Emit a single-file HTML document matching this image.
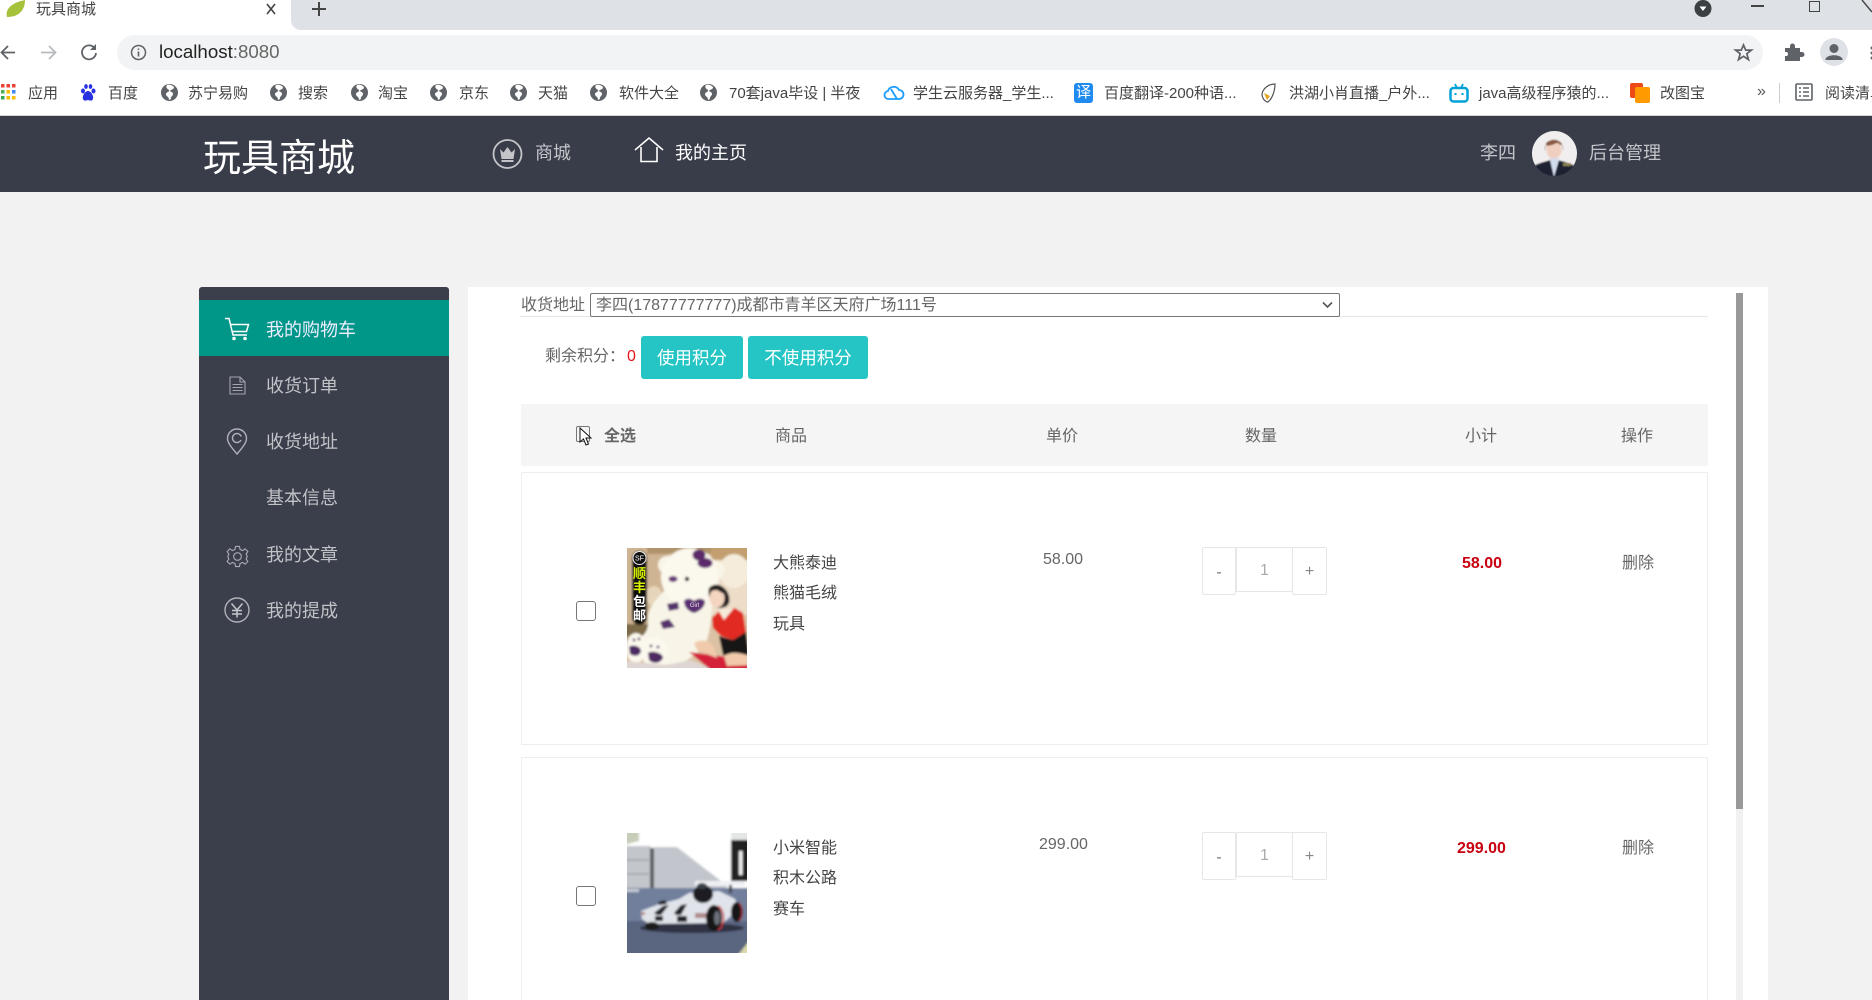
<!DOCTYPE html>
<html lang="zh-CN">
<head>
<meta charset="utf-8">
<title>玩具商城</title>
<style>
*{box-sizing:border-box}
html,body{margin:0;padding:0;width:1872px;height:1000px;overflow:hidden}
body{position:relative;background:#f2f2f2;font-family:"Liberation Sans","Noto Sans CJK SC",sans-serif;color:#666}
#p{position:absolute;left:0;top:0;width:1872px;height:1000px;overflow:hidden}
.a{position:absolute;white-space:nowrap}
.t{position:absolute;white-space:nowrap;line-height:24px;height:24px}
svg{position:absolute;overflow:visible}
.bm{font-size:15px;color:#444;top:82px}
.nav{font-size:18px;top:141px;color:#c4c5c9}
.side{font-size:18px;left:266px;color:#c2c3c7}
.c{font-size:16px;color:#666}
.n{font-size:16px;color:#444;left:773px}
.r{color:#c8000f;font-weight:bold;font-size:16px}
.card{position:absolute;left:521px;width:1187px;border:1px solid #eee;background:#fff}
.step{position:absolute;border:1px solid #e6e6e6;background:#fff;text-align:center;color:#888;font-size:16px;line-height:44px}
</style>
</head>
<body>
<div id="p">
<!-- browser chrome -->
<div class="a" style="left:0;top:0;width:1872px;height:116px;background:#fff"></div>
<div class="a" style="left:291px;top:0;width:1581px;height:30px;background:#dee1e6;border-bottom-left-radius:10px"></div>
<div class="a" style="left:0;top:115px;width:1872px;height:1px;background:#d5d6d8"></div>
<svg style="left:5px;top:0" width="22" height="18" viewBox="0 0 22 18"><path d="M2 17C0 9 6 3 20 0C20 9 15 17 2 17Z" fill="#a5c23a"/></svg>
<div class="t" style="left:36px;top:-2px;font-size:15px;color:#444">玩具商城</div>
<svg style="left:265px;top:3px" width="12" height="12" viewBox="0 0 12 12"><path d="M2 1L10 11M10 1L2 11" stroke="#444" stroke-width="1.6"/></svg>
<svg style="left:311px;top:1px" width="16" height="16" viewBox="0 0 16 16"><path d="M8 1V15M1 8H15" stroke="#444" stroke-width="2"/></svg>
<svg style="left:1694px;top:0" width="18" height="18" viewBox="0 0 18 18"><circle cx="9" cy="8.500" r="8.500" fill="#3c4043"/><path d="M5.500 6.500H12.500L9 11Z" fill="#fff"/></svg>
<div class="a" style="left:1751px;top:5px;width:13px;height:1.500px;background:#444"></div>
<div class="a" style="left:1809px;top:1px;width:11px;height:11px;border:1.500px solid #444;background:#dee1e6"></div>
<svg style="left:1860px;top:0" width="12" height="14" viewBox="0 0 12 14"><path d="M2 0L12 12" stroke="#444" stroke-width="1.400"/></svg>

<svg style="left:0;top:43px" width="20" height="20" viewBox="0 0 20 20"><path d="M15 9.500H2M8 3L1.500 9.500L8 16" fill="none" stroke="#5f6368" stroke-width="1.800"/></svg>
<svg style="left:39px;top:43px" width="20" height="20" viewBox="0 0 20 20"><path d="M2 9.500H16M10 3L16.500 9.500L10 16" fill="none" stroke="#b8babd" stroke-width="1.800"/></svg>
<svg style="left:79px;top:42px" width="20" height="20" viewBox="0 0 20 20"><path d="M15.500 6A7 7 0 1 0 17 11" fill="none" stroke="#5f6368" stroke-width="1.800"/><path d="M17 2V8H11Z" fill="#5f6368"/></svg>
<div class="a" style="left:117px;top:35px;width:1646px;height:35px;border-radius:18px;background:#f1f3f4"></div>
<svg style="left:130px;top:44px" width="17" height="17" viewBox="0 0 17 17"><circle cx="8.500" cy="8.500" r="7" fill="none" stroke="#5f6368" stroke-width="1.500"/><path d="M8.500 7.500V12.500M8.500 4.500V6" stroke="#5f6368" stroke-width="1.600"/></svg>
<div class="t" style="left:159px;top:40px;font-size:18.7px"><span style="color:#222">localhost</span><span style="color:#666">:8080</span></div>
<svg style="left:1734px;top:43px" width="19" height="19" viewBox="0 0 24 24"><path d="M12 2.500L14.800 9H22L16.200 13.500L18.300 21L12 16.800L5.700 21L7.800 13.500L2 9H9.200Z" fill="none" stroke="#5f6368" stroke-width="2.200"/></svg>
<svg style="left:1784px;top:43px" width="19" height="19" viewBox="0 0 19 19"><path d="M1 5H6V3A2.500 2.500 0 0 1 11 3V5H16V9H18A2.500 2.500 0 0 1 18 14H16V18H1V13H3A2.500 2.500 0 0 0 3 9H1Z" fill="#5f6368"/></svg>
<svg style="left:1820px;top:38px" width="28" height="28" viewBox="0 0 28 28"><circle cx="14" cy="14" r="14" fill="#dee1e6"/><circle cx="14" cy="10.500" r="4.500" fill="#5f6368"/><path d="M5.500 21C7 16 21 16 22.500 21V22H5.500Z" fill="#5f6368"/></svg>
<svg style="left:1869px;top:46px" width="6" height="14" viewBox="0 0 6 14"><circle cx="3" cy="2" r="1.500" fill="#5f6368"/><circle cx="3" cy="7" r="1.500" fill="#5f6368"/><circle cx="3" cy="12" r="1.500" fill="#5f6368"/></svg>

<!-- bookmarks -->
<svg style="left:0;top:84px" width="17" height="17" viewBox="0 0 17 17"><g><rect x="1" y="0" width="3.500" height="3.500" fill="#ea4335"/><rect x="6.500" y="0" width="3.500" height="3.500" fill="#ea4335"/><rect x="12" y="0" width="3.500" height="3.500" fill="#ea4335"/><rect x="1" y="6" width="3.500" height="3.500" fill="#4caf50"/><rect x="6.500" y="6" width="3.500" height="3.500" fill="#fbbc05"/><rect x="12" y="6" width="3.500" height="3.500" fill="#4285f4"/><rect x="1" y="12" width="3.500" height="3.500" fill="#34a853"/><rect x="6.500" y="12" width="3.500" height="3.500" fill="#fbbc05"/><rect x="12" y="12" width="3.500" height="3.500" fill="#fbbc05"/></g></svg>
<div class="t bm" style="left:28px">应用</div>
<svg style="left:80px;top:84px" width="16" height="18" viewBox="0 0 16 18"><g fill="#2932e1"><ellipse cx="3" cy="7" rx="2" ry="2.500"/><ellipse cx="6" cy="2.500" rx="1.800" ry="2.400"/><ellipse cx="10.500" cy="2.500" rx="1.800" ry="2.400"/><ellipse cx="13.500" cy="7" rx="2" ry="2.500"/><path d="M8 7C5 7 2 12 3 15C4 18 7 16 8 16C9 16 12 18 13 15C14 12 11 7 8 7Z"/></g></svg>
<div class="t bm" style="left:108px">百度</div>

<svg width="0" height="0"><defs><g id="g"><circle cx="8.500" cy="8.500" r="8.500" fill="#5f6368"/><path d="M6 1C4 4 7 5 8 6C9 8 5 8 5 10C5 13 8 12 8 16L10 15C9 13 12 12 12 10C12 8 10 8 9 7C10 5 13 6 13 3C11 1 8 0 6 1Z" fill="#fff"/></g></defs></svg>
<svg style="left:161px;top:84px" width="17" height="17"><use href="#g"/></svg><div class="t bm" style="left:188px">苏宁易购</div>
<svg style="left:270px;top:84px" width="17" height="17"><use href="#g"/></svg><div class="t bm" style="left:298px">搜索</div>
<svg style="left:351px;top:84px" width="17" height="17"><use href="#g"/></svg><div class="t bm" style="left:378px">淘宝</div>
<svg style="left:430px;top:84px" width="17" height="17"><use href="#g"/></svg><div class="t bm" style="left:459px">京东</div>
<svg style="left:510px;top:84px" width="17" height="17"><use href="#g"/></svg><div class="t bm" style="left:538px">天猫</div>
<svg style="left:590px;top:84px" width="17" height="17"><use href="#g"/></svg><div class="t bm" style="left:619px">软件大全</div>
<svg style="left:700px;top:84px" width="17" height="17"><use href="#g"/></svg><div class="t bm" style="left:729px">70套java毕设 | 半夜</div>
<svg style="left:884px;top:84px" width="20" height="18" viewBox="0 0 20 18"><path d="M5 15A4 4 0 0 1 4 7A6 6 0 0 1 15 6A4.500 4.500 0 0 1 15 15Z M7 5L13 15" fill="none" stroke="#1e9fff" stroke-width="1.800"/></svg>
<div class="t bm" style="left:913px">学生云服务器_学生...</div>
<div class="a" style="left:1074px;top:83px;width:19px;height:20px;border-radius:3px;background:#1f8bf0;color:#fff;font-size:15px;line-height:20px;text-align:center">译</div>
<div class="t bm" style="left:1104px">百度翻译-200种语...</div>
<svg style="left:1258px;top:83px" width="20" height="20" viewBox="0 0 20 20"><path d="M17 1C11 1 5 5 4 11C4 15 7 19 10 19C14 16 17 8 17 1Z" fill="#fff" stroke="#555" stroke-width="1.200"/><path d="M6 10L12 13L9 17Z" fill="#e5a31c"/></svg>
<div class="t bm" style="left:1289px">洪湖小肖直播_户外...</div>
<svg style="left:1449px;top:83px" width="20" height="20" viewBox="0 0 20 20"><path d="M6 1L8 5M14 1L12 5" stroke="#00a1d6" stroke-width="1.800"/><rect x="1.500" y="5" width="17" height="13.500" rx="3" fill="none" stroke="#00a1d6" stroke-width="2.500"/><path d="M6.500 10V12M13.500 10V12" stroke="#00a1d6" stroke-width="2"/></svg>
<div class="t bm" style="left:1479px">java高级程序猿的...</div>
<svg style="left:1630px;top:83px" width="20" height="20" viewBox="0 0 20 20"><rect x="0" y="0" width="13" height="15" rx="2" fill="#ee4a17"/><rect x="5" y="4" width="15" height="16" rx="2" fill="#ff9a00"/></svg>
<div class="t bm" style="left:1660px">改图宝</div>
<div class="t" style="left:1757px;top:80px;font-size:16px;color:#555">»</div>
<div class="a" style="left:1779px;top:83px;width:1px;height:20px;background:#ccc"></div>
<svg style="left:1795px;top:83px" width="18" height="18" viewBox="0 0 18 18"><rect x="1" y="1" width="16" height="16" rx="1" fill="none" stroke="#5f6368" stroke-width="1.600"/><path d="M4 5H6M8 5H14M4 9H6M8 9H14M4 13H6M8 13H14" stroke="#5f6368" stroke-width="1.400"/></svg>
<div class="t bm" style="left:1825px">阅读清单</div>

<!-- site header -->
<div class="a" style="left:0;top:116px;width:1872px;height:76px;background:#393d49"></div>
<div class="t" style="left:203px;top:138px;font-size:38px;line-height:42px;height:42px;color:#fff">玩具商城</div>
<svg style="left:492px;top:139px" width="31" height="30" viewBox="0 0 31 30"><circle cx="15.500" cy="15" r="14" fill="none" stroke="#c4c5c9" stroke-width="1.800"/><path d="M8 10L11.500 13.500L15.500 8L19.500 13.500L23 10L21.500 20H9.500Z" fill="#c4c5c9"/><rect x="9.500" y="21" width="12" height="2" fill="#c4c5c9"/></svg>
<div class="t nav" style="left:535px">商城</div>
<svg style="left:634px;top:137px" width="30" height="26" viewBox="0 0 30 26"><path d="M1 13L15 1L29 13M7 10V24.500H23V10" fill="none" stroke="#fff" stroke-width="1.600"/></svg>
<div class="t nav" style="left:675px;color:#fff">我的主页</div>
<div class="t nav" style="left:1480px">李四</div>
<svg style="left:1532px;top:131px" width="45" height="45" viewBox="0 0 45 45"><defs><clipPath id="av"><circle cx="22.500" cy="22.500" r="22.500"/></clipPath><filter id="b0"><feGaussianBlur stdDeviation="0.700"/></filter></defs><g clip-path="url(#av)"><g filter="url(#b0)"><rect x="-2" y="-2" width="49" height="49" fill="#f0eeee"/><path d="M13 20C11 5 33 5 31 20L30 14L14 14Z" fill="#8a5a42"/><ellipse cx="22" cy="19" rx="7.500" ry="8.500" fill="#f0cfc0"/><path d="M14 12C18 8 27 8 30 13L25 12L20 14L15 15Z" fill="#8a5a42"/><path d="M18 26H26V32H18Z" fill="#f0cfc0"/><path d="M-2 47V38C4 32 13 31 18 29L22 40L26 29C32 31 40 32 47 38V47Z" fill="#1e2230"/><path d="M18 29L22 46L27 29L25 27H19Z" fill="#d3dcec"/><rect x="31" y="32" width="8" height="3" fill="#8b8050"/></g></g></svg>
<div class="t nav" style="left:1589px">后台管理</div>

<!-- sidebar -->
<div class="a" style="left:199px;top:287px;width:250px;height:713px;background:#3b3e4b;border-radius:3px 3px 0 0"></div>
<div class="a" style="left:199px;top:300px;width:250px;height:56px;background:#009688"></div>
<svg style="left:224px;top:317px" width="26" height="24" viewBox="0 0 26 24"><path d="M1 1.500H5L9 18H23M7 7.500H24.500L22.500 14.500H8.500" fill="none" stroke="#fff" stroke-width="1.500"/><circle cx="10" cy="21.500" r="1.800" fill="#fff"/><circle cx="21" cy="21.500" r="1.800" fill="#fff"/></svg>
<div class="t side" style="top:318px;color:#eef">我的购物车</div>
<svg style="left:229px;top:376px" width="17" height="19" viewBox="0 0 17 19"><path d="M1 1H11L16 6V18H1Z M11 1V6H16 M3.500 8.500H13.500M3.500 11.500H13.500M3.500 14.500H13.500" fill="none" stroke="#a3a5ad" stroke-width="1.100"/></svg>
<div class="t side" style="top:374px">收货订单</div>
<svg style="left:226px;top:428px" width="22" height="27" viewBox="0 0 22 27"><path d="M11 26C6 20 1.500 15 1.500 10.500A9.500 9.500 0 0 1 20.500 10.500C20.500 15 16 20 11 26Z" fill="none" stroke="#b0b2b9" stroke-width="1.400"/><path d="M15 12A4.500 4.500 0 1 1 15.200 8.500" fill="none" stroke="#b0b2b9" stroke-width="1.400"/></svg>
<div class="t side" style="top:430px">收货地址</div>
<div class="t side" style="top:486px">基本信息</div>
<svg style="left:226px;top:545px" width="23" height="23" viewBox="0 0 24 24"><path d="M10 1.500H14L14.700 4.700L17.300 5.800L20 4L22.800 6.800L21 9.500L22.200 12L22.200 12L21 14.500L22.800 17.200L20 20L17.300 18.200L14.700 19.300L14 22.500H10L9.300 19.300L6.700 18.200L4 20L1.200 17.200L3 14.500L1.800 12L3 9.500L1.200 6.800L4 4L6.700 5.800L9.300 4.700Z" fill="none" stroke="#a9abb2" stroke-width="1.200"/><circle cx="12" cy="12" r="4" fill="none" stroke="#a9abb2" stroke-width="1.200"/></svg>
<div class="t side" style="top:543px">我的文章</div>
<svg style="left:224px;top:597px" width="26" height="26" viewBox="0 0 26 26"><circle cx="13" cy="13" r="12" fill="none" stroke="#b0b2b9" stroke-width="1.400"/><path d="M7.500 6.500L13 13L18.500 6.500M13 13V20.500M8 13.500H18M8 17H18" fill="none" stroke="#c5c6cb" stroke-width="1.500"/></svg>
<div class="t side" style="top:599px">我的提成</div>

<!-- main panel -->
<div class="a" style="left:468px;top:287px;width:1300px;height:713px;background:#fff"></div>
<div class="a" style="left:1736px;top:293px;width:7px;height:707px;background:#f1f1f1"></div>
<div class="a" style="left:1736px;top:293px;width:7px;height:516px;background:#999"></div>

<div class="t c" style="left:521px;top:294px">收货地址</div>
<div class="a" style="left:520px;top:316px;width:1188px;height:1px;background:#e6e6e6"></div>
<div class="a" style="left:590px;top:293px;width:750px;height:24px;border:1px solid #767676;border-radius:2px;background:#fff;font-size:16px;line-height:23px;padding-left:5px;color:#666">李四(17877777777)成都市青羊区天府广场111号</div>
<svg style="left:1322px;top:301px" width="11" height="8" viewBox="0 0 11 8"><path d="M1 1.500L5.500 6L10 1.500" fill="none" stroke="#555" stroke-width="1.600"/></svg>

<div class="t c" style="left:545px;top:345px">剩余积分：</div>
<div class="t" style="left:627px;top:345px;font-size:16px;color:#e8141e">0</div>
<div class="a" style="left:641px;top:336px;width:102px;height:43px;border-radius:3px;background:#26c5c5;color:#fff;font-size:17.5px;line-height:45px;text-align:center">使用积分</div>
<div class="a" style="left:748px;top:336px;width:120px;height:43px;border-radius:3px;background:#26c5c5;color:#fff;font-size:17.5px;line-height:45px;text-align:center">不使用积分</div>

<div class="a" style="left:521px;top:404px;width:1187px;height:62px;background:#f5f5f5"></div>
<div class="a" style="left:576px;top:426px;width:14px;height:16px;border:1px solid #767676;border-radius:2px"></div>
<svg style="left:579px;top:427px" width="14" height="20" viewBox="0 0 14 20"><path d="M1 1V15L4.500 12L7 18L9.500 17L7 11H12Z" fill="#fff" stroke="#111" stroke-width="1"/></svg>
<div class="t c" style="left:604px;top:425px;font-weight:bold">全选</div>
<div class="t c" style="left:775px;top:425px">商品</div>
<div class="t c" style="left:1046px;top:425px">单价</div>
<div class="t c" style="left:1245px;top:425px">数量</div>
<div class="t c" style="left:1465px;top:425px">小计</div>
<div class="t c" style="left:1621px;top:425px">操作</div>

<!-- item 1 -->
<div class="card" style="top:472px;height:273px"></div>
<div class="a" style="left:576px;top:601px;width:20px;height:20px;border:1.500px solid #767676;border-radius:3px;background:#fff"></div>
<svg style="left:627px;top:548px" width="120" height="120" viewBox="0 0 120 120">
<defs><clipPath id="c1"><rect width="120" height="120"/></clipPath><filter id="b1"><feGaussianBlur stdDeviation="1"/></filter></defs>
<g clip-path="url(#c1)"><g filter="url(#b1)">
<rect x="-3" y="-3" width="126" height="126" fill="#dcc2a4"/>
<rect x="-3" y="-3" width="43" height="83" fill="#cfb493"/>
<rect x="20" y="-3" width="70" height="9" fill="#b0936a"/>
<rect x="84" y="-3" width="40" height="15" fill="#c39f6f"/>
<rect x="84" y="12" width="40" height="55" fill="#ecdcc8"/>
<ellipse cx="107" cy="23" rx="15" ry="17" fill="#f5ecdc"/>
<ellipse cx="27" cy="48" rx="8" ry="10" fill="#e6d5bb"/>
<rect x="-3" y="76" width="33" height="12" fill="#7d6a4a"/>
<rect x="-3" y="88" width="28" height="10" fill="#a89070"/>
<path d="M37 43C28 52 20 62 21 72C22 84 16 88 10 92C14 110 30 118 44 117C58 116 72 106 80 92C84 78 86 60 85 48Z" fill="#f8f5e8"/>
<circle cx="40" cy="17" r="9" fill="#f8f4e6"/><circle cx="88" cy="22" r="9.500" fill="#f8f4e6"/>
<ellipse cx="63" cy="29" rx="29" ry="29" fill="#fbf8ed"/>
<ellipse cx="72" cy="7" rx="6.500" ry="5.500" fill="#5b2b6b"/><ellipse cx="78" cy="15" rx="7.500" ry="5" fill="#5b2b6b"/>
<ellipse cx="46" cy="31" rx="4.500" ry="3" fill="#6a3a7c"/><circle cx="60" cy="31" r="2.200" fill="#232323"/>
<path d="M40 56L51 54L52 61L42 63Z" fill="#55306c"/>
<path d="M33 74L42 71L48 79L36 81Z" fill="#55306c"/>
<path d="M57 53C60 49 65 51 67 53C69 51 75 49 78 53C78 60 71 64 67 65C63 64 57 60 57 53Z" fill="#5a2d72"/>
<ellipse cx="9" cy="100" rx="10" ry="15" fill="#fbf8ed"/>
<ellipse cx="28" cy="105" rx="13" ry="16" fill="#fbf8ed"/>
<path d="M2 99C5 96 14 98 14 103C13 108 8 109 3 106Z" fill="#4d2a63"/>
<path d="M21 105C25 102 36 105 36 110C33 116 26 116 22 112Z" fill="#4d2a63"/>
<circle cx="7" cy="92" r="1.400" fill="#4d2a63"/><circle cx="12" cy="91" r="1.400" fill="#4d2a63"/>
<circle cx="24" cy="98" r="1.400" fill="#4d2a63"/><circle cx="31" cy="99" r="1.400" fill="#4d2a63"/>
<path d="M-3 113L40 117L64 112L90 123H-3Z" fill="#ded6d2"/>
<path d="M62 104L123 112V123H85Z" fill="#d4243a"/>
<path d="M82 40C80 46 84 58 92 60C100 60 104 56 102 48C100 40 90 32 82 40Z" fill="#231d1d"/>
<ellipse cx="90" cy="50" rx="7.500" ry="9.500" fill="#f4d6c0"/>
<path d="M82 43C86 38 94 38 97 46L90 42Z" fill="#231d1d"/>
<path d="M85 70L93 62L108 60L116 65L119 84L106 92L94 88L86 80Z" fill="#e12b22"/>
<path d="M91 62L97 72L107 60Z" fill="#f7ead9"/>
<path d="M92 88L106 92L119 84L123 113L96 107Z" fill="#151515"/>
<path d="M67 95C75 90 85 93 88 102L90 110L80 106L70 102Z" fill="#f0caab"/>
<path d="M97 108C106 102 116 106 123 108V117L100 118Z" fill="#f0caab"/>
<rect x="5" y="3" width="15" height="74" rx="7.500" fill="#111"/>
</g>
<circle cx="12.500" cy="10" r="6.500" fill="#111" stroke="#eee" stroke-width="1"/>
<text x="12.500" y="12.500" font-size="7" fill="#fff" text-anchor="middle" font-family="Liberation Sans,sans-serif">SF</text>
<text x="12.500" y="30" font-size="13" fill="#d8f000" text-anchor="middle" font-family="Noto Sans CJK SC,sans-serif" font-weight="bold">顺</text>
<text x="12.500" y="44" font-size="13" fill="#d8f000" text-anchor="middle" font-family="Noto Sans CJK SC,sans-serif" font-weight="bold">丰</text>
<text x="12.500" y="58" font-size="13" fill="#fff" text-anchor="middle" font-family="Noto Sans CJK SC,sans-serif" font-weight="bold">包</text>
<text x="12.500" y="72" font-size="13" fill="#fff" text-anchor="middle" font-family="Noto Sans CJK SC,sans-serif" font-weight="bold">邮</text>
<text x="67.500" y="59" font-size="6" fill="#eee" text-anchor="middle" font-family="Liberation Sans,sans-serif">Girl</text>
</g></svg>
<div class="t n" style="top:552px">大熊泰迪</div>
<div class="t n" style="top:582px">熊猫毛绒</div>
<div class="t n" style="top:613px">玩具</div>
<div class="t c" style="left:1043px;top:548px">58.00</div>
<div class="step" style="left:1236px;top:547px;width:57px;height:45px;color:#aaa;line-height:46px">1</div>
<div class="step" style="left:1202px;top:547px;width:34px;height:48px;border-radius:2px;line-height:50px;color:#777">-</div>
<div class="step" style="left:1292px;top:547px;width:35px;height:48px;border-radius:2px;line-height:48px">+</div>
<div class="t r" style="left:1462px;top:552px">58.00</div>
<div class="t c" style="left:1622px;top:552px">删除</div>

<!-- item 2 -->
<div class="a" style="left:521px;top:757px;width:1187px;height:243px;border:1px solid #eee;border-bottom:none;background:#fff"></div>
<div class="a" style="left:576px;top:886px;width:20px;height:20px;border:1.500px solid #767676;border-radius:3px;background:#fff"></div>
<svg style="left:627px;top:833px" width="120" height="120" viewBox="0 0 120 120">
<defs><clipPath id="c2"><rect width="120" height="120"/></clipPath></defs>
<g clip-path="url(#c2)"><g filter="url(#b1)">
<rect x="-3" y="-3" width="126" height="126" fill="#fff"/>
<path d="M-3 -3H12V8L-3 12Z" fill="#c6cdb9"/>
<path d="M-3 13H24V56H-3Z" fill="#c3c6cb"/>
<path d="M-3 40H22V42H-3Z M-3 26H22V28H-3Z" fill="#a9adb3"/>
<path d="M27 14H50L94 48H100V56H27Z" fill="#c2c6cc"/>
<rect x="23" y="15" width="4" height="41" fill="#5a5e63"/>
<rect x="104" y="7" width="19" height="41" fill="#202024"/>
<rect x="104" y="-3" width="19" height="10" fill="#e4e6e6"/>
<rect x="112" y="18" width="3.500" height="24" fill="#f0f0f0"/>
<rect x="-3" y="55" width="126" height="68" fill="#717f9d"/>
<rect x="-3" y="56" width="15" height="3" fill="#c8ccd4"/>
<rect x="-3" y="88" width="126" height="35" fill="#5a6580"/>
<path d="M110 123L123 107V123Z" fill="#d9d8a8"/>
<ellipse cx="65" cy="95" rx="52" ry="5" fill="#2d3142"/>
<rect x="68" y="48" width="50" height="5" fill="#eef0f4"/>
<rect x="102" y="52" width="3" height="8" fill="#444"/>
<path d="M14 78L30 72L52 66L62 60L92 58L108 66L112 76L96 90L22 91L15 86Z" fill="#e0e3ea"/>
<ellipse cx="76" cy="61" rx="10" ry="9" fill="#1b1c22"/>
<ellipse cx="75" cy="53" rx="5" ry="3" fill="#3a3f4a"/>
<path d="M31 69L38 67L40 71L32 72Z" fill="#1d1e24"/>
<path d="M27 80L36 73L42 72L34 82H30Z M47 80L54 72L60 71L54 82H49Z" fill="#22242b"/>
<path d="M28 83H36V88H28Z M50 83H60V89H50Z" fill="#22242b"/>
<path d="M68 80H82V85H68Z" fill="#ae8a8c"/>
<path d="M14 79H18V82H14Z" fill="#b28a88"/>
<ellipse cx="87" cy="85" rx="8" ry="13" fill="#141416"/><ellipse cx="90" cy="85" rx="3" ry="7" fill="#6a7079"/><path d="M91 73A9 13 0 0 1 91 97" fill="none" stroke="#c8343a" stroke-width="1.500"/>
<ellipse cx="110" cy="79" rx="6" ry="10" fill="#141416"/><path d="M112 70A5 10 0 0 1 112 88" fill="none" stroke="#b03338" stroke-width="1.300"/>
<ellipse cx="25" cy="93" rx="7" ry="4" fill="#1a1a1d"/>
</g></g></svg>
<div class="t n" style="top:837px">小米智能</div>
<div class="t n" style="top:867px">积木公路</div>
<div class="t n" style="top:898px">赛车</div>
<div class="t c" style="left:1039px;top:833px">299.00</div>
<div class="step" style="left:1236px;top:832px;width:57px;height:45px;color:#aaa;line-height:46px">1</div>
<div class="step" style="left:1202px;top:832px;width:34px;height:48px;border-radius:2px;line-height:50px;color:#777">-</div>
<div class="step" style="left:1292px;top:832px;width:35px;height:48px;border-radius:2px;line-height:48px">+</div>
<div class="t r" style="left:1457px;top:837px">299.00</div>
<div class="t c" style="left:1622px;top:837px">删除</div>
</div>
</body>
</html>
